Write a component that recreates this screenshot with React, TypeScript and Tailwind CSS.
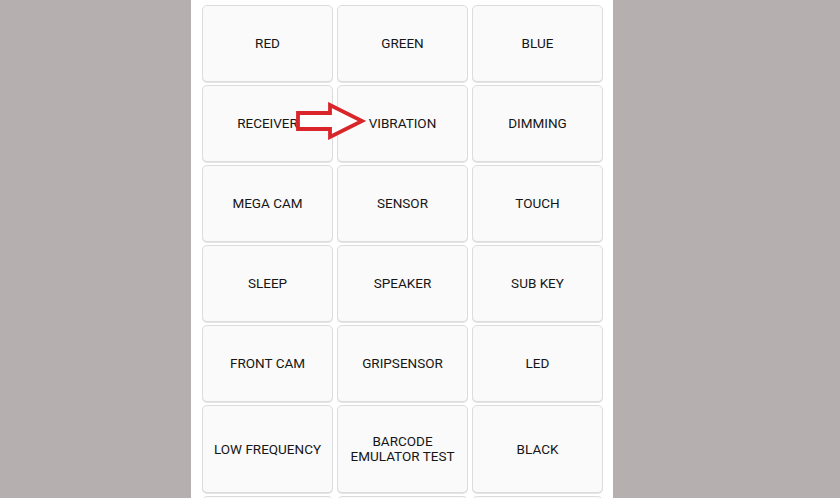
import React from 'react';

const rows: string[][] = [
    ['RED', 'GREEN', 'BLUE'],
    ['RECEIVER', 'VIBRATION', 'DIMMING'],
    ['MEGA CAM', 'SENSOR', 'TOUCH'],
    ['SLEEP', 'SPEAKER', 'SUB KEY'],
    ['FRONT CAM', 'GRIPSENSOR', 'LED'],
    ['LOW FREQUENCY', 'BARCODE EMULATOR TEST', 'BLACK'],
    ['', '', ''],
];

function TestButton({ label, tall }: { label: string; tall: boolean }) {
    return (
        <button
            className={`flex items-center justify-center rounded-[5px] border border-[#dcdcdc] bg-[#fafafa] px-2 text-center text-[13.5px] leading-[15px] text-[#161616] shadow-[0_1px_0_#e4e4e4] ${tall ? 'h-[88px]' : 'h-[77px]'}`}
        >
            {label === 'BARCODE EMULATOR TEST' ? (
                <span>
                    BARCODE
                    <br />
                    EMULATOR TEST
                </span>
            ) : (
                label
            )}
        </button>
    );
}

export default function App() {
    return (
        <div className="flex h-[498px] w-full overflow-hidden bg-[#b5b0af] font-['Roboto',sans-serif]">
            <div className="relative ml-[191px] w-[422px] bg-white pl-[11px] pr-[10px] pt-[5px]">
                <div className="grid grid-cols-[131px_131px_131px] gap-x-[4px] gap-y-[3px]">
                    {rows.map((row, i) =>
                        row.map((label, j) => (
                            <TestButton key={`${i}-${j}`} label={label} tall={i === 5} />
                        ))
                    )}
                </div>

                {/* red pointer arrow drawn over the grid */}
                <svg
                    className="absolute left-[104px] top-[102px]"
                    width="72"
                    height="38"
                    viewBox="0 0 72 38"
                >
                    <path
                        d="M3 11 L35 11 L35 3 L67 19 L35 35 L35 27 L3 27 Z"
                        fill="white"
                        stroke="#d8262b"
                        strokeWidth="3.8"
                        strokeLinejoin="miter"
                    />
                </svg>
            </div>
        </div>
    );
}
